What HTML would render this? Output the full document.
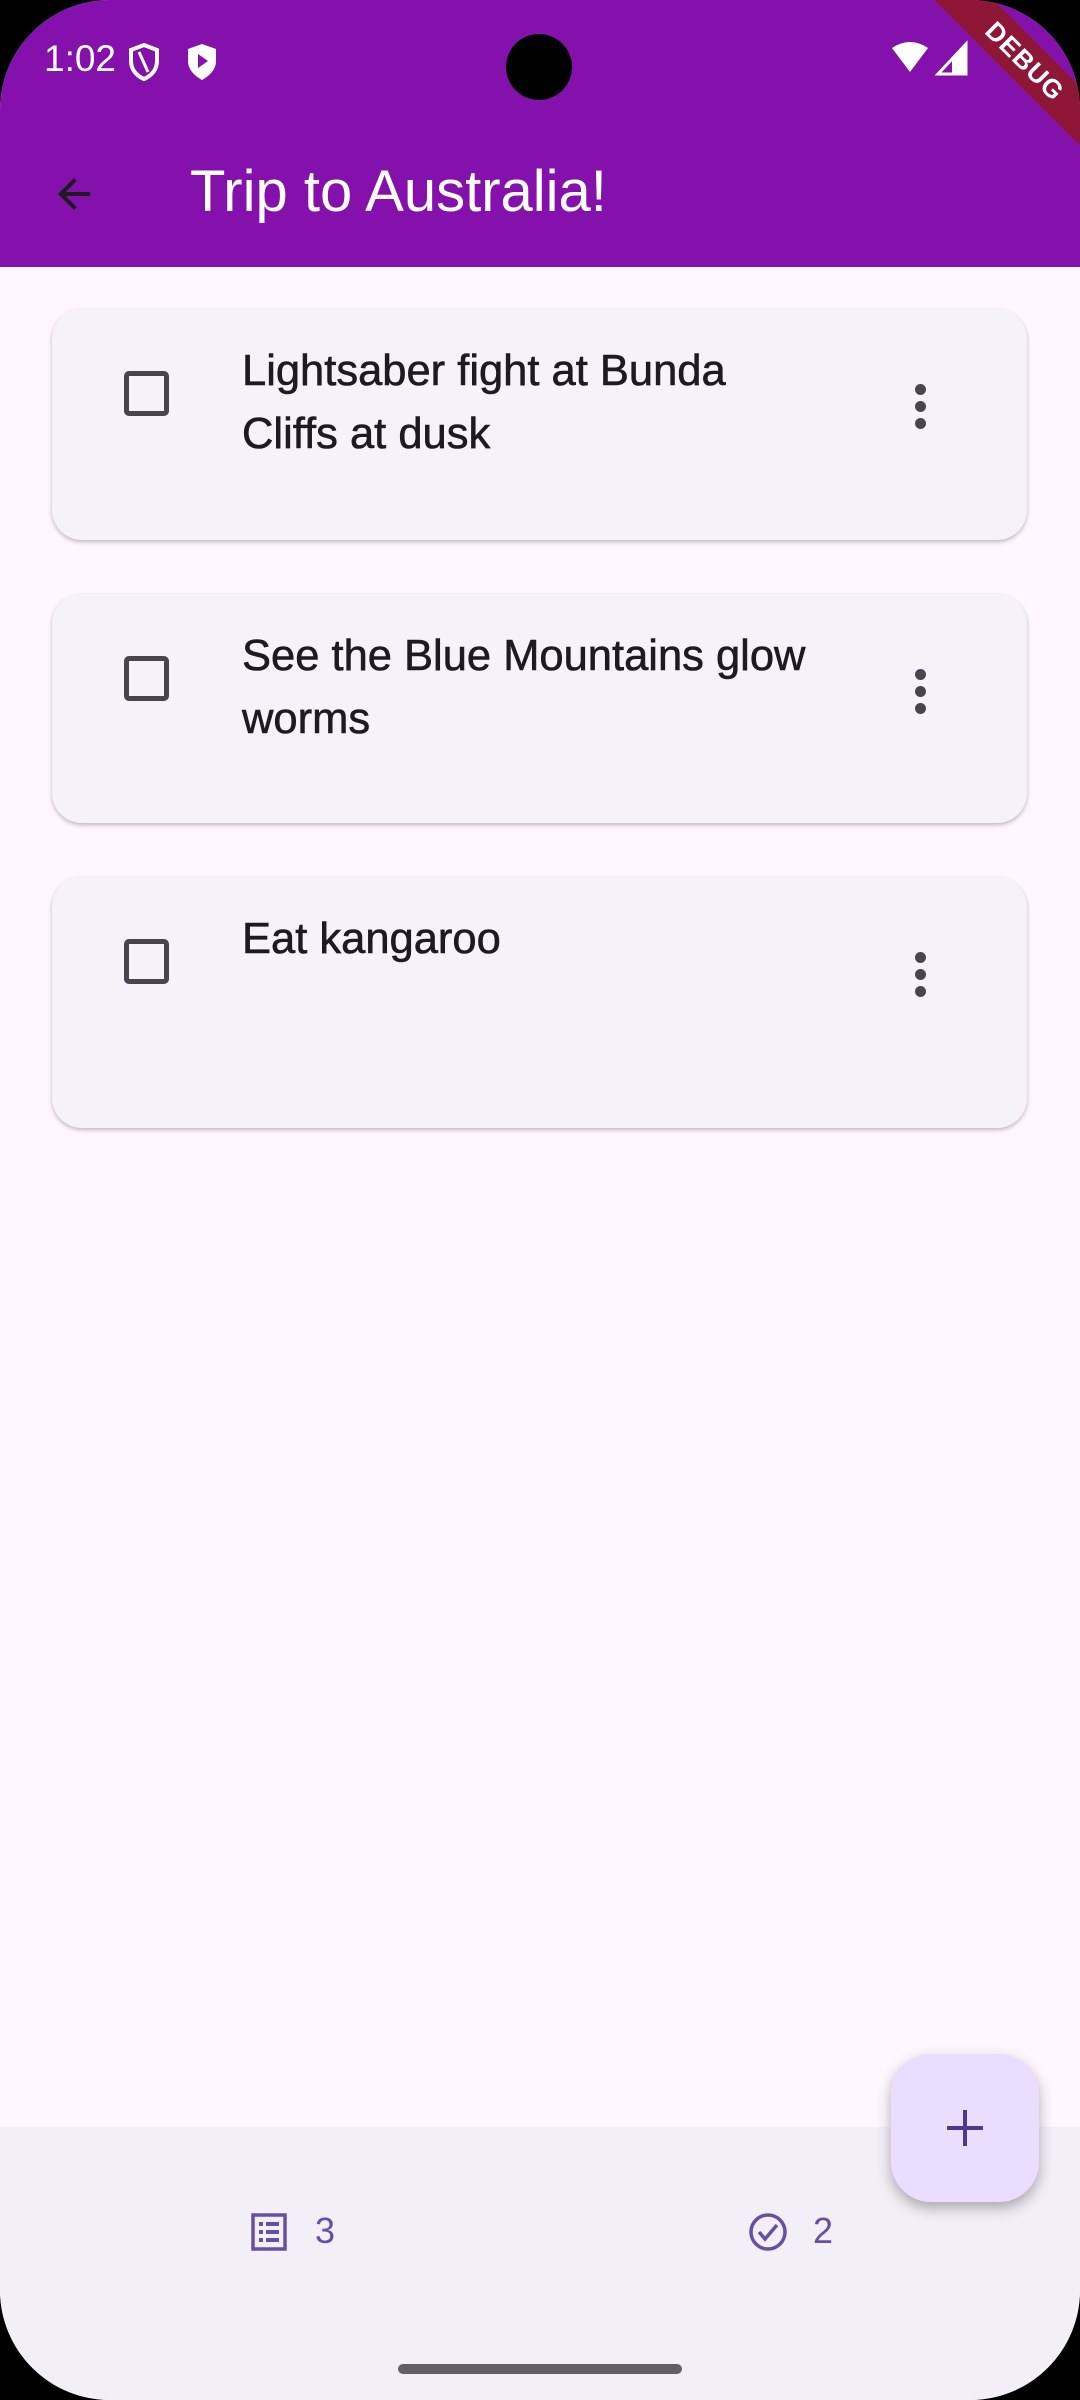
<!DOCTYPE html>
<html><head><meta charset="utf-8"><style>
*{margin:0;padding:0;box-sizing:border-box}
html,body{width:1080px;height:2400px;background:#000;overflow:hidden;font-family:"Liberation Sans",Roboto,sans-serif}
.screen{position:absolute;left:0;top:0;width:1080px;height:2400px;border-radius:110px;overflow:hidden;background:#fef7fe}
.appbar{position:absolute;left:0;top:0;width:1080px;height:267px;background:#8511ac;overflow:hidden}
.status{position:absolute;top:38px;color:#fff;font-size:37px}
.title{position:absolute;left:190px;top:158px;color:#fff;font-size:58px}
.card{position:absolute;left:52px;width:975px;background:#f5f2f8;border-radius:30px;box-shadow:0 2px 4px rgba(0,0,0,.25)}
.cb{position:absolute;left:72px;top:62px;width:45px;height:45px;border:5px solid #49454f;border-radius:5px}
.txt{position:absolute;left:190px;top:31px;font-size:43.5px;line-height:63px;color:#1d1b20;width:572px;-webkit-text-stroke:0.6px #1d1b20}
.dots{position:absolute;left:863px;top:75px;width:12px}
.dots i{display:block;width:11px;height:11px;border-radius:50%;background:#49454f;margin-bottom:6px}
.bottom{position:absolute;left:0;top:2127px;width:1080px;height:273px;background:#f3eff7}
.fab{position:absolute;left:891px;top:2054px;width:148px;height:148px;border-radius:40px;background:#eaddff;box-shadow:0 6px 14px rgba(0,0,0,.3)}
.num{position:absolute;top:2210px;font-size:36px;color:#6750a4}
.home{position:absolute;left:398px;top:2364px;width:284px;height:10px;border-radius:5px;background:#625f66}
</style></head><body>
<div class="screen">
<div class="appbar">
<div class="status" style="left:44px">1:02</div>
<svg style="position:absolute;left:128px;top:42px" width="32" height="40" viewBox="0 0 32 40"><path d="M16 3 L29 8 V19 C29 28 23 34 16 37 C9 34 3 28 3 19 V8 Z" fill="none" stroke="#fff" stroke-width="4"/><path d="M11 10 L20 30" stroke="#fff" stroke-width="3"/></svg>
<svg style="position:absolute;left:186px;top:42px" width="32" height="40" viewBox="0 0 32 40"><path d="M16 2 L30 7 V19 C30 28 23 34 16 38 C9 34 2 28 2 19 V7 Z" fill="#fff"/><path d="M12 12 L22 19 L12 26 Z" fill="#8511ac"/></svg>
<div style="position:absolute;left:506px;top:34px;width:66px;height:66px;border-radius:50%;background:#000"></div>
<svg style="position:absolute;left:890px;top:40px" width="84" height="36" viewBox="0 0 84 36"><path d="M2 8 Q20 -4 38 8 L20 32 Z" fill="#fff"/><path d="M76 4 V34 H48 Z" fill="none" stroke="#fff" stroke-width="3"/><path d="M62 20 L76 4 V34 H62 Z" fill="#fff"/></svg>
<div style="position:absolute;left:875px;top:40px;width:300px;height:42px;background:#8e1738;transform:rotate(45deg);transform-origin:center;color:#fff;font-size:26px;font-weight:bold;text-align:center;line-height:42px;letter-spacing:1px">DEBUG</div>
<svg style="position:absolute;left:50px;top:170px" width="48" height="48" viewBox="0 0 24 24"><path d="M20 11H7.83l5.59-5.59L12 4l-8 8 8 8 1.41-1.41L7.830 13H20v-2z" fill="#1d1b20"/></svg>
<div class="title">Trip to Australia!</div>
</div>
<div class="card" style="top:309px;height:231px"><div class="cb"></div><div class="txt">Lightsaber fight at Bunda Cliffs at dusk</div><div class="dots"><i></i><i></i><i></i></div></div>
<div class="card" style="top:594px;height:229px"><div class="cb"></div><div class="txt">See the Blue Mountains glow worms</div><div class="dots"><i></i><i></i><i></i></div></div>
<div class="card" style="top:877px;height:251px"><div class="cb"></div><div class="txt">Eat kangaroo</div><div class="dots"><i></i><i></i><i></i></div></div>
<div class="bottom"></div>
<svg style="position:absolute;left:251px;top:2213px" width="36" height="38" viewBox="0 0 36 38"><rect x="2" y="2" width="32" height="34" fill="none" stroke="#6750a4" stroke-width="3.5"/><g fill="#6750a4"><rect x="8" y="9" width="4" height="4"/><rect x="15" y="9" width="13" height="4"/><rect x="8" y="17" width="4" height="4"/><rect x="15" y="17" width="13" height="4"/><rect x="8" y="25" width="4" height="4"/><rect x="15" y="25" width="13" height="4"/></g></svg>
<div class="num" style="left:315px">3</div>
<svg style="position:absolute;left:748px;top:2212px" width="40" height="40" viewBox="0 0 40 40"><circle cx="20" cy="20" r="17" fill="none" stroke="#6750a4" stroke-width="3.5"/><path d="M11 20 L17 27 L29 13" fill="none" stroke="#6750a4" stroke-width="3.5"/></svg>
<div class="num" style="left:813px">2</div>
<div class="fab"><svg style="position:absolute;left:52px;top:52px" width="44" height="44" viewBox="0 0 44 44"><path d="M22 4V40M4 22H40" stroke="#4f378b" stroke-width="4"/></svg></div>
<div class="home"></div>
</div>
</body></html>
